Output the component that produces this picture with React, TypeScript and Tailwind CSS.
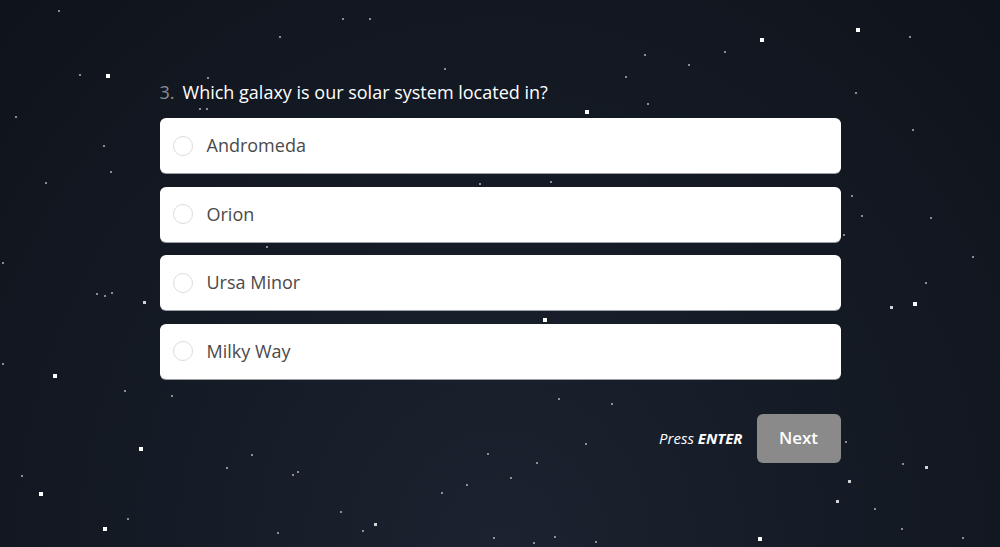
import { useState } from 'react';

const OPTIONS = ['Andromeda', 'Orion', 'Ursa Minor', 'Milky Way'];

// [x, y, size] — big stars are 4px, faint ones 2px
const STARS: [number, number, number][] = [
  [58, 10, 2], [342, 18, 2], [279, 36, 2], [106, 74, 4], [79, 74, 2], [207, 77, 2],
  [444, 68, 2], [15, 116, 2], [103, 145, 2], [110, 171, 2], [45, 182, 2], [199, 108, 2],
  [206, 108, 2], [266, 246, 2], [479, 183, 2], [2, 262, 2], [369, 18, 2],
  [856, 28, 4], [760, 38, 4], [909, 36, 2], [644, 54, 2], [688, 64, 2], [724, 51, 2],
  [625, 76, 2], [647, 103, 2], [585, 110, 4], [855, 92, 2], [912, 129, 2], [550, 181, 2],
  [851, 195, 2], [861, 215, 2], [930, 217, 2], [843, 234, 2], [972, 256, 2],
  [96, 293, 2], [104, 295, 2], [111, 292, 2], [143, 301, 3], [2, 363, 2], [53, 374, 4],
  [124, 390, 2], [171, 395, 2], [139, 447, 4], [21, 475, 2], [39, 492, 4], [103, 527, 4],
  [127, 518, 2], [226, 467, 2], [251, 454, 2], [292, 474, 2], [297, 471, 2], [340, 511, 2],
  [374, 523, 3], [362, 530, 2], [277, 532, 2], [441, 492, 2], [466, 484, 2], [487, 453, 2],
  [493, 537, 2], [543, 318, 4], [925, 282, 2], [913, 302, 4], [890, 306, 3], [558, 398, 2],
  [611, 403, 2], [585, 443, 2], [536, 462, 2], [510, 477, 2], [845, 441, 2], [902, 463, 2],
  [925, 466, 3], [848, 480, 3], [836, 500, 3], [874, 508, 2], [901, 528, 2], [962, 537, 2],
  [758, 537, 4], [533, 542, 2], [554, 536, 2], [595, 541, 2],
];

export default function App() {
  const [selected, setSelected] = useState<number | null>(null);

  return (
    <div
      className="relative h-[547px] w-full overflow-hidden bg-[radial-gradient(ellipse_at_50%_100%,#1b2330_0%,#141a24_55%,#0f131b_100%)]"
      style={{ fontFamily: '"Open Sans", "Noto Sans", sans-serif' }}
    >
      {/* Star field */}
      {STARS.map(([x, y, s], i) => (
        <span
          key={i}
          className={`absolute bg-white ${s >= 4 ? 'opacity-100' : s === 3 ? 'opacity-80' : 'opacity-50'}`}
          style={{ left: x, top: y, width: s, height: s }}
        />
      ))}

      <div className="relative mx-auto w-[681px] pt-[79px]">
        {/* Question */}
        <h2 className="mb-[12px] flex gap-[8px] text-[18px] leading-[27px] text-white">
          <span className="text-[#8a8d93]">3.</span>
          <span>Which galaxy is our solar system located in?</span>
        </h2>

        {/* Options */}
        <div className="flex flex-col gap-[13.5px]">
          {OPTIONS.map((opt, i) => (
            <button
              key={opt}
              onClick={() => setSelected(i)}
              className="flex h-[55px] items-center gap-[14px] rounded-[6px] bg-white pl-[13px] text-left shadow-[0_1px_0_#9ca0a6]"
            >
              <span
                className={`h-[20px] w-[20px] rounded-full border ${
                  selected === i ? 'border-[6px] border-[#888]' : 'border-[#dcdcdc]'
                }`}
              />
              <span className="text-[18px] text-[#4a4a4a]">{opt}</span>
            </button>
          ))}
        </div>

        {/* Footer */}
        <div className="mt-[35px] flex items-center justify-end gap-[14px]">
          <span className="text-[15px] italic text-white">
            Press <b className="font-bold">ENTER</b>
          </span>
          <button className="h-[49px] w-[84px] rounded-[6px] bg-[#8a8a8a] text-[17px] font-semibold text-white">
            Next
          </button>
        </div>
      </div>
    </div>
  );
}
